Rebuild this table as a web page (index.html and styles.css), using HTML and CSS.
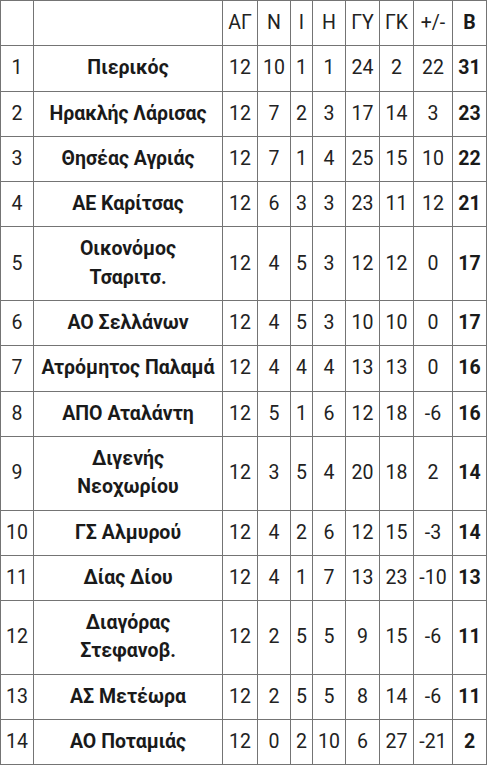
FILE: index.html
```html
<!DOCTYPE html>
<html lang="el">
<head>
<meta charset="utf-8">
<link rel="stylesheet" href="styles.css">
</head>
<body>
<table class="standings">
  <colgroup>
    <col class="c-pos"><col class="c-team"><col class="c-ag"><col class="c-n"><col class="c-i"><col class="c-h"><col class="c-gy"><col class="c-gk"><col class="c-diff"><col class="c-b">
  </colgroup>
  <thead>
    <tr><th></th><th></th><th>ΑΓ</th><th>Ν</th><th>Ι</th><th>Η</th><th>ΓΥ</th><th>ΓΚ</th><th>+/-</th><th class="pts">Β</th></tr>
  </thead>
  <tbody>
    <tr><td>1</td><td class="team">Πιερικός</td><td>12</td><td>10</td><td>1</td><td>1</td><td>24</td><td>2</td><td>22</td><td class="pts">31</td></tr>
    <tr><td>2</td><td class="team">Ηρακλής Λάρισας</td><td>12</td><td>7</td><td>2</td><td>3</td><td>17</td><td>14</td><td>3</td><td class="pts">23</td></tr>
    <tr><td>3</td><td class="team">Θησέας Αγριάς</td><td>12</td><td>7</td><td>1</td><td>4</td><td>25</td><td>15</td><td>10</td><td class="pts">22</td></tr>
    <tr><td>4</td><td class="team">ΑΕ Καρίτσας</td><td>12</td><td>6</td><td>3</td><td>3</td><td>23</td><td>11</td><td>12</td><td class="pts">21</td></tr>
    <tr><td>5</td><td class="team">Οικονόμος<br>Τσαριτσ.</td><td>12</td><td>4</td><td>5</td><td>3</td><td>12</td><td>12</td><td>0</td><td class="pts">17</td></tr>
    <tr><td>6</td><td class="team">ΑΟ Σελλάνων</td><td>12</td><td>4</td><td>5</td><td>3</td><td>10</td><td>10</td><td>0</td><td class="pts">17</td></tr>
    <tr><td>7</td><td class="team">Ατρόμητος Παλαμά</td><td>12</td><td>4</td><td>4</td><td>4</td><td>13</td><td>13</td><td>0</td><td class="pts">16</td></tr>
    <tr><td>8</td><td class="team">ΑΠΟ Αταλάντη</td><td>12</td><td>5</td><td>1</td><td>6</td><td>12</td><td>18</td><td>-6</td><td class="pts">16</td></tr>
    <tr><td>9</td><td class="team">Διγενής<br>Νεοχωρίου</td><td>12</td><td>3</td><td>5</td><td>4</td><td>20</td><td>18</td><td>2</td><td class="pts">14</td></tr>
    <tr><td>10</td><td class="team">ΓΣ Αλμυρού</td><td>12</td><td>4</td><td>2</td><td>6</td><td>12</td><td>15</td><td>-3</td><td class="pts">14</td></tr>
    <tr><td>11</td><td class="team">Δίας Δίου</td><td>12</td><td>4</td><td>1</td><td>7</td><td>13</td><td>23</td><td>-10</td><td class="pts">13</td></tr>
    <tr><td>12</td><td class="team">Διαγόρας<br>Στεφανοβ.</td><td>12</td><td>2</td><td>5</td><td>5</td><td>9</td><td>15</td><td>-6</td><td class="pts">11</td></tr>
    <tr><td>13</td><td class="team">ΑΣ Μετέωρα</td><td>12</td><td>2</td><td>5</td><td>5</td><td>8</td><td>14</td><td>-6</td><td class="pts">11</td></tr>
    <tr><td>14</td><td class="team">ΑΟ Ποταμιάς</td><td>12</td><td>0</td><td>2</td><td>10</td><td>6</td><td>27</td><td>-21</td><td class="pts">2</td></tr>
  </tbody>
</table>
</body>
</html>
```

FILE: styles.css
```css
html, body {
  margin: 0;
  padding: 0;
  background: #ffffff;
}

.standings {
  border-collapse: collapse;
  table-layout: fixed;
  width: 487px;
  font-family: Roboto, "Noto Sans", "DejaVu Sans", sans-serif;
  font-size: 19.5px;
  color: #222222;
}

.standings th,
.standings td {
  border: 1px solid #747474;
  padding: 8px 0;
  line-height: 28.3px;
  text-align: center;
  vertical-align: middle;
  font-weight: 400;
  white-space: nowrap;
}

.standings .team,
.standings .pts {
  font-weight: 700;
  color: #1a1a1a;
}

.c-pos { width: 33px; }
.c-team { width: 189px; }
.c-ag { width: 35px; }
.c-n { width: 33px; }
.c-i { width: 22px; }
.c-h { width: 33px; }
.c-gy { width: 34px; }
.c-gk { width: 34px; }
.c-diff { width: 39px; }
.c-b { width: 34px; }
```
